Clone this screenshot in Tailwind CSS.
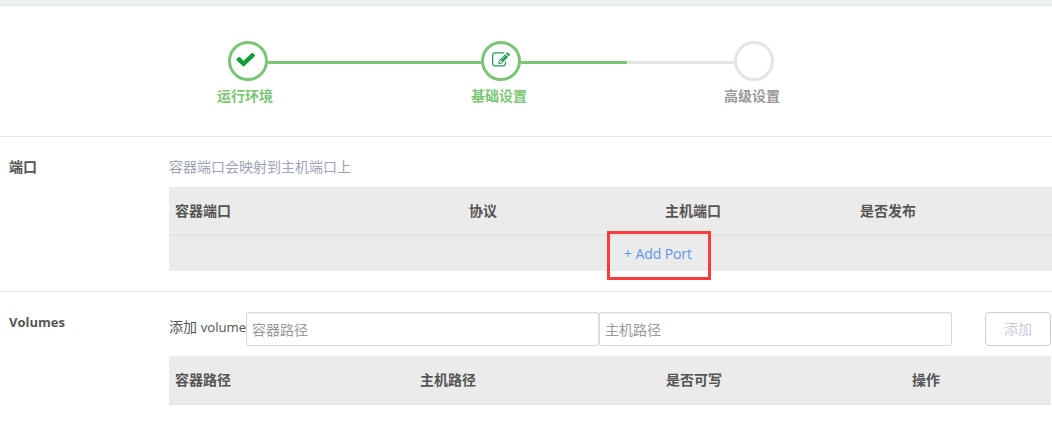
<!DOCTYPE html>
<html lang="zh-CN">
<head>
<meta charset="utf-8">
<title>基础设置</title>
<script src="https://cdn.jsdelivr.net/npm/@tailwindcss/browser@4"></script>
</head>
<body class="h-[422px] w-[1052px] overflow-hidden bg-white font-['Open_Sans','Noto_Sans_CJK_SC',sans-serif] text-[14px] leading-5 text-[#555]">
<header class="h-1.5 border-b border-[#e2e2e2] bg-[#eaeff0]"></header>

<section class="h-[131px] border-b border-[#e7e8ec] pt-[35px]">
  <div class="flex items-center pl-[228px]">
    <div class="flex size-10 items-center justify-center rounded-full border-3 border-[#7cc576]">
      <svg class="mr-1 mb-1 h-[20.5px] w-[21.5px] shrink-0" viewBox="0 0 1792 1792" preserveAspectRatio="none" fill="#149c35"><path d="M1671 566q0 40-28 68l-724 724-136 136q-28 28-68 28t-68-28l-136-136-362-362q-28-28-28-68t28-68l136-136q28-28 68-28t68 28l294 295 656-657q28-28 68-28t68 28l136 136q28 28 28 68z"/></svg>
    </div>
    <div class="mt-[3px] h-[3px] w-[213px] bg-[#7cc576]"></div>
    <div class="flex size-10 items-center justify-center rounded-full border-3 border-[#7cc576]">
      <svg class="mr-px mb-[3px] h-[18px] w-[18px] shrink-0" viewBox="0 0 1792 1792" fill="#229c55"><path d="M888 1184l116-116-152-152-116 116v56h96v96h56zm440-720q-16-16-33 1l-350 350q-17 17-1 33t33-1l350-350q17-17 1-33zm80 594v190q0 119-84.5 203.5t-203.5 84.5h-832q-119 0-203.5-84.5t-84.5-203.5v-832q0-119 84.5-203.5t203.5-84.5h832q63 0 117 25 15 7 18 23 3 17-9 29l-49 49q-14 14-32 8-23-6-45-6h-832q-66 0-113 47t-47 113v832q0 66 47 113t113 47h832q66 0 113-47t47-113v-126q0-13 9-22l64-64q15-15 35-7t20 29zm-96-738l288 288-672 672h-288v-288zm444 132l-92 92-288-288 92-92q28-28 68-28t68 28l152 152q28 28 28 68t-28 68z"/></svg>
    </div>
    <div class="mt-[3px] h-[3px] w-[106px] bg-[#7cc576]"></div>
    <div class="mt-[3px] h-[3px] w-[107px] bg-[#e4e4e4]"></div>
    <div class="size-10 rounded-full border-3 border-[#e4e4e4]"></div>
  </div>
  <div class="mt-[5px] flex pl-[217px] font-bold text-[#7cc576]">
    <span class="w-[254px]">运行环境</span>
    <span class="w-[253px]">基础设置</span>
    <span class="text-[#999]">高级设置</span>
  </div>
</section>

<section class="flex h-[155px] border-b border-[#e7e8ec] pt-5">
  <h2 class="w-[169px] shrink-0 pl-[9px] font-bold">端口</h2>
  <div class="w-[883px]">
    <p class="text-[#9ea4b3]">容器端口会映射到主机端口上</p>
    <div class="mt-[10px] h-[84px] bg-[#ebebeb]">
      <div class="flex h-[49px] items-center border-b-2 border-[#e4e4e4] pl-1.5 font-bold">
        <span class="w-[294px]">容器端口</span>
        <span class="w-[196px]">协议</span>
        <span class="w-[195px]">主机端口</span>
        <span>是否发布</span>
      </div>
      <div class="relative flex h-[35px] items-center pl-[455px]">
        <a class="tracking-[-0.1px] text-[#5e98ea]">+ Add Port</a>
        <div class="absolute -top-[5px] left-[438px] h-[49px] w-[104px] border-3 border-[#fa3c3c]"></div>
      </div>
    </div>
  </div>
</section>

<section class="flex pt-5">
  <h2 class="w-[169px] shrink-0 pl-[9px] text-[13px] font-bold">Volumes</h2>
  <div class="w-[882px]">
    <div class="flex h-[34px]">
      <label class="w-[77px] shrink-0 pt-[5px] whitespace-nowrap">添加 <span class="text-[13.2px]">volume</span></label>
      <input class="h-[34px] w-[353px] rounded-xs border border-[#d9d9d9] px-[5px] inset-shadow-2xs placeholder:text-[#999]" placeholder="容器路径">
      <input class="h-[34px] w-[353px] rounded-xs border border-[#d9d9d9] px-[5px] inset-shadow-2xs placeholder:text-[#999]" placeholder="主机路径">
      <button class="ml-[33px] h-[34px] w-[66px] rounded border border-[#cacdd8] text-[#c8cbd4]">添加</button>
    </div>
    <div class="mt-[10px] flex h-[49px] items-center border-b-2 border-[#e4e4e4] bg-[#ebebeb] pl-1.5 font-bold">
      <span class="w-[245px]">容器路径</span>
      <span class="w-[246px]">主机路径</span>
      <span class="w-[246px]">是否可写</span>
      <span>操作</span>
    </div>
  </div>
</section>
</body>
</html>
